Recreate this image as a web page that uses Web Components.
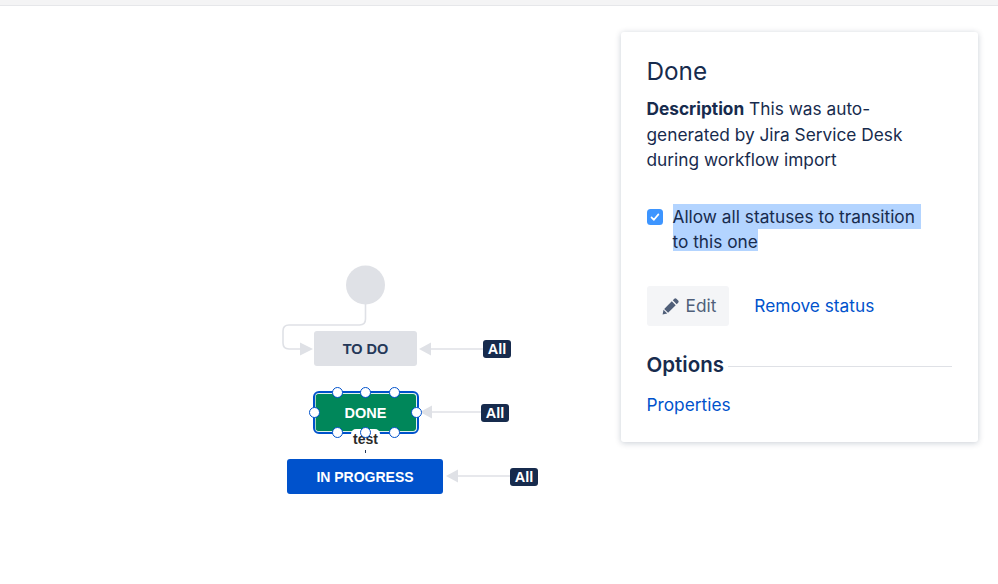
<!DOCTYPE html>
<html lang="en">
<head>
<meta charset="utf-8">
<title>Workflow status</title>
<style>
  html, body { margin: 0; height: 100%; background: #fff; overflow: hidden; }
</style>
</head>
<body>
<workflow-page>
  <workflow-canvas slot="canvas">
    <status-node label="TO DO" x="314" y="331" w="103" h="35" bg="#dfe1e6" color="#253858"></status-node>
    <status-node label="DONE" x="315" y="394" w="101" h="37" bg="#00875a" color="#fff" selected></status-node>
    <status-node label="IN PROGRESS" x="287" y="459" w="156" h="35" bg="#0052cc" color="#fff" size="14"></status-node>
    <all-badge x="483" y="340"></all-badge>
    <all-badge x="481" y="404"></all-badge>
    <all-badge x="510" y="468"></all-badge>
    <edge-label x="351" y="429">test</edge-label>
  </workflow-canvas>
  <status-panel slot="panel" heading="Done">
    <span slot="description"><b>Description</b> This was auto-generated by Jira Service Desk during workflow import</span>
    <span slot="allow-1">Allow all statuses to transition</span>
    <span slot="allow-2">to this one</span>
  </status-panel>
</workflow-page>

<script>
class WorkflowPage extends HTMLElement {
  constructor() {
    super();
    this.attachShadow({ mode: "open" });
    this.shadowRoot.innerHTML = `
      <style>
        :host { display: block; height: 584px; }
        .topbar { height: 5px; background: #f4f4f5; border-bottom: 1px solid #e6e7ea; }
        .main { display: flex; align-items: flex-start; }
        .left { flex: 1; }
        .right { padding: 26px 20px 0 0; }
      </style>
      <div class="topbar"></div>
      <div class="main">
        <div class="left"><slot name="canvas"></slot></div>
        <div class="right"><slot name="panel"></slot></div>
      </div>
    `;
  }
}

class WorkflowCanvas extends HTMLElement {
  constructor() {
    super();
    this.attachShadow({ mode: "open" });
    // canvas coordinates are page coordinates, the box just starts under the top bar
    this.shadowRoot.innerHTML = `
      <style>
        :host { display: block; position: relative; height: 578px; }
        .wrap { position: absolute; left: 0; top: -6px; width: 620px; height: 584px; }
        svg { position: absolute; left: 0; top: 0; }
      </style>
      <div class="wrap">
        <svg width="620" height="584" viewBox="0 0 620 584" fill="none">
          <circle cx="365.5" cy="285" r="19.5" fill="#dfe1e6"/>
          <path d="M365.5 304V319q0 6-6 6H289q-6 0-6 6V343q0 6 6 6H301" stroke="#dfe1e6" stroke-width="1.6"/>
          <path d="M313 349L300 342.5V355.500Z" fill="#dfe1e6"/>
          <path d="M483 349H428" stroke="#dfe1e6" stroke-width="1.6"/>
          <path d="M419 349L431 342.500V355.500Z" fill="#dfe1e6"/>
          <path d="M481 412H430" stroke="#dfe1e6" stroke-width="1.6"/>
          <path d="M420 412L432 405.500V418.500Z" fill="#dfe1e6"/>
          <path d="M510 476H455" stroke="#dfe1e6" stroke-width="1.6"/>
          <path d="M446 476L458 469.500V482.500Z" fill="#dfe1e6"/>
          <path d="M365.500 450V453" stroke="#253858" stroke-width="1"/>
        </svg>
        <slot></slot>
      </div>
    `;
  }
}

class StatusNode extends HTMLElement {
  constructor() {
    super();
    this.attachShadow({ mode: "open" });
    this.render();
  }

  render() {
    const get = (n) => this.getAttribute(n);
    const selected = this.hasAttribute("selected");
    const handles = selected
      ? [[22, -2], [50.500, -2], [79, -2], [-1, 18], [101, 18], [22, 38], [50.500, 38], [79, 38]]
          .map(([x, y]) => `<i style="left:${x}px;top:${y}px"></i>`).join("")
      : "";
    this.shadowRoot.innerHTML = `
      <style>
        :host {
          display: flex; align-items: center; justify-content: center;
          position: absolute; left: ${get("x")}px; top: ${get("y")}px;
          width: ${get("w")}px; height: ${get("h")}px;
          background: ${get("bg")}; color: ${get("color")};
          border-radius: 3px;
          font: 700 ${get("size") || "14.500"}px "Liberation Sans", Arial, sans-serif;
        }
        .sel {
          position: absolute; left: -2.500px; top: -3px; right: -2.500px; bottom: -2.500px;
          border: 2.500px solid #0052cc; border-radius: 6px;
          box-shadow: inset 0 0 0 .75px #d8f0e6;
        }
        i {
          position: absolute; z-index: 3; box-sizing: border-box; width: 11px; height: 11px; margin: -5.500px 0 0 -5.500px;
          background: #fff; border: 1.700px solid #0052cc; border-radius: 50%;
        }
      </style>
      ${selected ? '<div class="sel"></div>' : ""}
      <span>${get("label")}</span>
      ${handles}
    `;
  }
}

class AllBadge extends HTMLElement {
  constructor() {
    super();
    this.attachShadow({ mode: "open" });
    this.shadowRoot.innerHTML = `
      <style>
        :host {
          display: flex; align-items: center; justify-content: center;
          position: absolute; left: ${this.getAttribute("x")}px; top: ${this.getAttribute("y")}px;
          width: 28px; height: 18px; border-radius: 3px;
          background: #172b4d; color: #fff;
          font: 700 14.500px "Liberation Sans", Arial, sans-serif;
        }
      </style>
      All
    `;
  }
}

class EdgeLabel extends HTMLElement {
  constructor() {
    super();
    this.attachShadow({ mode: "open" });
    this.shadowRoot.innerHTML = `
      <style>
        :host {
          display: flex; align-items: center; justify-content: center;
          position: absolute; z-index: 2; left: ${this.getAttribute("x")}px; top: ${this.getAttribute("y")}px;
          width: 29px; height: 20px; border-radius: 5px 5px 0 0;
          background: #fff;
          font: 700 14px "Liberation Sans", Arial, sans-serif;
        }
        span { color: #2b2b2b; }
      </style>
      <span><slot></slot></span>
    `;
  }
}

class StatusPanel extends HTMLElement {
  constructor() {
    super();
    this.attachShadow({ mode: "open" });
    this.shadowRoot.innerHTML = `
      <style>
        :host {
          display: block; box-sizing: border-box; width: 357px; height: 410px;
          padding: 23px 26px 0 25.500px; background: #fff; border-radius: 3px;
          box-shadow: 0 1px 6px rgba(9, 30, 66, .22);
          color: #172b4d;
          font: 17.300px/25.500px Inter, "Noto Sans", sans-serif;
        }
        h2 { margin: 0; font-size: 24.300px; line-height: 32px; font-weight: 400; }
        .desc { margin-top: 9px; width: 270px; }
        .allow { display: flex; gap: 10px; margin-top: 31px; }
        .box { flex: none; width: 16px; height: 16px; margin-top: 5px; display: block; }
        .line { width: fit-content; background: #b3d4ff; }
        .line.first { padding-right: 6px; }
        .line.second { height: 22px; }
        .actions { display: flex; align-items: center; gap: 25px; margin-top: 35px; }
        .btn {
          display: flex; align-items: center; gap: 6px; height: 40px; padding: 0 13px 0 15px;
          background: #f4f5f7; border-radius: 3px; color: #505f79;
        }
        a { color: #0052cc; text-decoration: none; }
        .options { display: flex; align-items: center; gap: 4px; margin-top: 26px; }
        h3 { margin: 0; font-size: 20.500px; line-height: 26px; font-weight: 600; }
        hr { flex: 1; height: 1px; margin: 2px 0 0; border: 0; background: #dfe1e6; }
        .props { display: block; margin-top: 14px; }
      </style>
      <h2>${this.getAttribute("heading")}</h2>
      <div class="desc"><slot name="description"></slot></div>
      <div class="allow">
        <svg class="box" viewBox="0 0 16 16" fill="none">
          <rect width="16" height="16" rx="3.500" fill="#3d95ff"/>
          <path d="M4.500 8.300l2.400 2.500 4.500-5.400" stroke="#fff" stroke-width="1.700" stroke-linecap="round" stroke-linejoin="round"/>
        </svg>
        <div class="lines">
          <div class="line first"><slot name="allow-1"></slot></div>
          <div class="line second"><slot name="allow-2"></slot></div>
        </div>
      </div>
      <div class="actions">
        <div class="btn">
          <svg width="18" height="18" viewBox="0 0 18 18">
            <path d="M12.300 1.800a1.500 1.500 0 0 1 2.100 0l1.800 1.800a1.500 1.500 0 0 1 0 2.100L14.700 7.200 10.800 3.300ZM9.800 4.300l3.900 3.900-7.600 7.600-3.900-3.900ZM1.500 12.800l3.700 3.700-4.600 1Z" fill="#505f79"/>
          </svg>
          <span>Edit</span>
        </div>
        <a href="#">Remove status</a>
      </div>
      <div class="options"><h3>Options</h3><hr></div>
      <a class="props" href="#">Properties</a>
    `;
  }
}

customElements.define("workflow-page", WorkflowPage);
customElements.define("workflow-canvas", WorkflowCanvas);
customElements.define("status-node", StatusNode);
customElements.define("all-badge", AllBadge);
customElements.define("edge-label", EdgeLabel);
customElements.define("status-panel", StatusPanel);
</script>
</body>
</html>
